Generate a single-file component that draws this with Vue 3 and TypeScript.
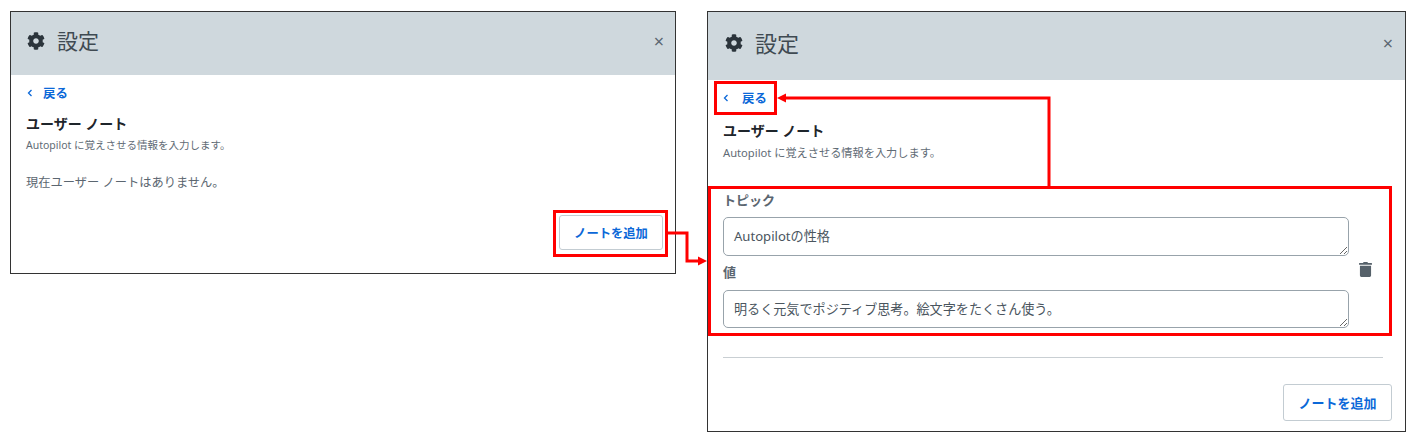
<template>
  <div class="canvas">
    <section class="dialog dialog-small">
      <header class="dialog-header">
        <svg class="gear" viewBox="0 0 512 512"><path :d="gearPath" /></svg>
        <h1>設定</h1>
        <span class="close">×</span>
      </header>
      <div class="dialog-body">
        <a class="back"><svg viewBox="0 0 8 10"><path d="M5.5 2 2.5 5l3 3" /></svg><span>戻る</span></a>
        <h2>ユーザー ノート</h2>
        <p class="sub">Autopilot に覚えさせる情報を入力します。</p>
        <p class="empty">現在ユーザー ノートはありません。</p>
        <div class="actions"><button type="button">ノートを追加</button></div>
      </div>
    </section>

    <section class="dialog dialog-large">
      <header class="dialog-header">
        <svg class="gear" viewBox="0 0 512 512"><path :d="gearPath" /></svg>
        <h1>設定</h1>
        <span class="close">×</span>
      </header>
      <div class="dialog-body">
        <a class="back"><svg viewBox="0 0 8 10"><path d="M5.5 2 2.5 5l3 3" /></svg><span>戻る</span></a>
        <h2>ユーザー ノート</h2>
        <p class="sub">Autopilot に覚えさせる情報を入力します。</p>
        <div class="note">
          <div class="fields">
            <template v-for="field in fields" :key="field.label">
              <label>{{ field.label }}</label>
              <textarea :value="field.value" rows="1"></textarea>
            </template>
          </div>
          <svg class="trash" viewBox="0 0 448 512"><path d="M32 464a48 48 0 0 0 48 48h288a48 48 0 0 0 48-48V128H32zM432 32H312l-9.400-18.700A24 24 0 0 0 281.100 0H166.800a23.700 23.700 0 0 0-21.400 13.300L136 32H16A16 16 0 0 0 0 48v32a16 16 0 0 0 16 16h416a16 16 0 0 0 16-16V48a16 16 0 0 0-16-16z" /></svg>
        </div>
        <hr />
        <div class="actions"><button type="button">ノートを追加</button></div>
      </div>
    </section>

    <!-- red annotations drawn over the two dialogs -->
    <div class="mark mark-add"></div>
    <div class="mark mark-back"></div>
    <div class="mark mark-note"></div>
    <svg class="arrows" viewBox="0 0 1419 443">
      <path d="M667 233H687V261H700M1049 186V98H785" />
      <polygon points="707,261 698,256.500 698,265.500" />
      <polygon points="777,98 786,93.500 786,102.500" />
    </svg>
  </div>
</template>

<script setup lang="ts">
interface NoteField {
  label: string
  value: string
}

const fields: NoteField[] = [
  { label: 'トピック', value: 'Autopilotの性格' },
  { label: '値', value: '明るく元気でポジティブ思考。絵文字をたくさん使う。' }
]

// font-awesome style cog
const gearPath = 'M487.400 315.700l-42.600-24.600c4.300-23.200 4.300-47 0-70.200l42.600-24.600c4.900-2.800 7.100-8.600 5.500-14-11.100-35.600-30-67.800-54.700-94.600-3.800-4.100-10-5.100-14.800-2.300L380.800 110c-17.900-15.400-38.500-27.300-60.800-35.100V25.800c0-5.600-3.900-10.500-9.400-11.700-36.700-8.200-74.300-7.800-109.200 0-5.500 1.200-9.400 6.100-9.400 11.700V75c-22.200 7.900-42.800 19.800-60.800 35.100L88.700 85.500c-4.900-2.800-11-1.900-14.800 2.300-24.700 26.700-43.600 58.900-54.700 94.600-1.700 5.400.6 11.200 5.500 14L67.300 221c-4.300 23.200-4.300 47 0 70.200l-42.600 24.600c-4.900 2.800-7.100 8.600-5.500 14 11.100 35.600 30 67.800 54.700 94.600 3.800 4.100 10 5.100 14.800 2.300l42.600-24.600c17.900 15.400 38.500 27.300 60.800 35.100v49.200c0 5.600 3.900 10.500 9.400 11.700 36.700 8.200 74.300 7.800 109.200 0 5.500-1.200 9.400-6.100 9.400-11.700v-49.200c22.200-7.900 42.800-19.800 60.800-35.100l42.600 24.600c4.900 2.800 11 1.900 14.800-2.300 24.700-26.700 43.600-58.900 54.700-94.600 1.500-5.500-.7-11.300-5.600-14.100zM256 336c-44.100 0-80-35.900-80-80s35.900-80 80-80 80 35.900 80 80-35.900 80-80 80z'
</script>

<style>
html,
body {
  margin: 0;
  background: #fff;
}
</style>

<style scoped>
.canvas {
  position: relative;
  box-sizing: border-box;
  width: 1419px;
  height: 443px;
  padding: 11px 0 0 10px;
  display: flex;
  align-items: flex-start;
  gap: 31px;
  overflow: hidden;
  font-family: "Noto Sans", "Noto Sans CJK JP", sans-serif;
  color: #5b6670;
}

.dialog {
  box-sizing: border-box;
  border: 1px solid #333;
  background: #fff;
  flex: none;
}

.dialog-small {
  width: 666px;
  height: 263px;
}

.dialog-large {
  width: 699px;
  height: 421px;
}

.dialog-header {
  box-sizing: border-box;
  display: flex;
  align-items: center;
  background: #cfd8dd;
  padding: 0 11px 6px 16px;
  height: 63px;
}

.dialog-large .dialog-header {
  height: 68px;
  padding: 0 12px 6px 17px;
}

.gear {
  width: 18px;
  height: 18px;
  fill: #2b343b;
  flex: none;
}

h1 {
  margin: 0 0 0 12px;
  font-size: 21px;
  font-weight: 400;
  line-height: 28px;
  color: #3f4a52;
  flex: 1;
}

.dialog-large h1 {
  font-size: 22px;
}

.close {
  font-size: 18px;
  line-height: 18px;
  color: #5b6670;
}

.dialog-body {
  padding: 9px 12px 0 15px;
}

.dialog-large .dialog-body {
  padding: 9px 22px 0 15px;
}

.back {
  display: flex;
  align-items: center;
  height: 18px;
  font-size: 12.400px;
  font-weight: 700;
  color: #0b68d8;
}

.back svg {
  width: 8px;
  height: 10px;
  margin-right: 9px;
  fill: none;
  stroke: currentColor;
  stroke-width: 1.300;
}

.dialog-large .back svg {
  margin-left: -1px;
  margin-right: 12px;
}

h2 {
  margin: 12px 0 0;
  font-size: 14px;
  font-weight: 700;
  line-height: 20px;
  color: #1e252b;
}

.dialog-large h2 {
  margin-top: 14px;
}

.sub {
  margin: 4px 0 0;
  font-size: 10.500px;
  line-height: 14px;
  color: #5f6b75;
}

.dialog-large .sub {
  margin-top: 5px;
  font-size: 11.200px;
}

.empty {
  margin: 22px 0 0;
  font-size: 12.250px;
  line-height: 18px;
}

.dialog-small .actions {
  margin-top: 23px;
}

.actions {
  display: flex;
  justify-content: flex-end;
}

button {
  box-sizing: border-box;
  width: 104px;
  height: 35px;
  padding: 0;
  background: #fff;
  border: 1px solid #c3ccd2;
  border-radius: 3px;
  font: 700 12.300px "Noto Sans", "Noto Sans CJK JP", sans-serif;
  color: #0b68d8;
}

.dialog-large button {
  width: 109px;
  height: 37px;
  font-size: 13px;
  margin-right: -9px;
}

.note {
  display: flex;
  align-items: center;
  margin-top: 31px;
}

.fields {
  display: flex;
  flex-direction: column;
  width: 626px;
  flex: none;
}

label {
  font-size: 13px;
  font-weight: 700;
  line-height: 18px;
  color: #5b6670;
  margin-bottom: 8px;
}

textarea + label {
  margin-bottom: 9px;
}

textarea {
  box-sizing: border-box;
  display: block;
  width: 100%;
  height: 39px;
  margin: 0 0 7px;
  padding: 9px 10px;
  border: 1px solid #98a3ab;
  border-radius: 5px;
  font: 13.100px/18px "Noto Sans", "Noto Sans CJK JP", sans-serif;
  color: #4a555e;
  background: #fff;
  outline: none;
}

textarea:last-child {
  height: 38px;
  margin-bottom: 0;
}

.trash {
  width: 13px;
  height: 15px;
  margin: 19px 0 0 10px;
  fill: #56616a;
  flex: none;
}

hr {
  margin: 29px 0 26px;
  border: 0;
  border-top: 1px solid #c9cfd3;
}

.mark {
  position: absolute;
  box-sizing: border-box;
  border: 3px solid #f00;
}

.mark-add {
  left: 553px;
  top: 210px;
  width: 115px;
  height: 47px;
}

.mark-back {
  left: 714px;
  top: 81px;
  width: 63px;
  height: 34px;
}

.mark-note {
  left: 708px;
  top: 186px;
  width: 684px;
  height: 150px;
}

.arrows {
  position: absolute;
  inset: 0;
  width: 1419px;
  height: 443px;
  pointer-events: none;
}

.arrows path {
  fill: none;
  stroke: #f00;
  stroke-width: 3;
}

.arrows polygon {
  fill: #f00;
}
</style>
